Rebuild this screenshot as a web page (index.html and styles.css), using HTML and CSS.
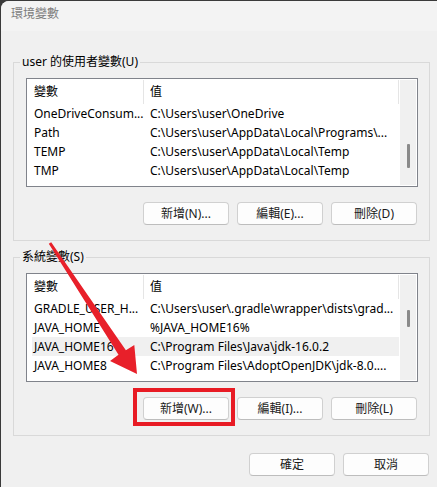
FILE: index.html
```html
<!DOCTYPE html>
<html lang="zh-Hant">
<head>
<meta charset="utf-8">
<title>環境變數</title>
<link rel="stylesheet" href="styles.css">
</head>
<body>
<div class="window">
  <div class="titlebar">環境變數</div>
  <div class="content">
    <section class="group">
      <span class="group-title">user 的使用者變數(U)</span>
      <div class="listview">
        <div class="table">
          <div class="row header"><span class="c1">變數</span><span class="c2">值</span></div>
          <div class="row"><span class="c1">OneDriveConsum...</span><span class="c2">C:\Users\user\OneDrive</span></div>
          <div class="row"><span class="c1">Path</span><span class="c2">C:\Users\user\AppData\Local\Programs\...</span></div>
          <div class="row"><span class="c1">TEMP</span><span class="c2">C:\Users\user\AppData\Local\Temp</span></div>
          <div class="row"><span class="c1">TMP</span><span class="c2">C:\Users\user\AppData\Local\Temp</span></div>
        </div>
        <div class="scrollbar"><div class="thumb thumb-user"></div></div>
      </div>
      <div class="buttons">
        <button class="btn">新增(N)...</button>
        <button class="btn">編輯(E)...</button>
        <button class="btn">刪除(D)</button>
      </div>
    </section>

    <section class="group group-system">
      <span class="group-title">系統變數(S)</span>
      <div class="listview">
        <div class="table">
          <div class="row header"><span class="c1">變數</span><span class="c2">值</span></div>
          <div class="row"><span class="c1">GRADLE_USER_H...</span><span class="c2">C:\Users\user\.gradle\wrapper\dists\grad...</span></div>
          <div class="row"><span class="c1">JAVA_HOME</span><span class="c2">%JAVA_HOME16%</span></div>
          <div class="row hl"><span class="c1">JAVA_HOME16</span><span class="c2">C:\Program Files\Java\jdk-16.0.2</span></div>
          <div class="row"><span class="c1">JAVA_HOME8</span><span class="c2">C:\Program Files\AdoptOpenJDK\jdk-8.0....</span></div>
        </div>
        <div class="scrollbar"><div class="thumb thumb-system"></div></div>
      </div>
      <div class="buttons">
        <div class="marked">
          <button class="btn">新增(W)...</button>
          <span class="redbox"></span>
        </div>
        <button class="btn">編輯(I)...</button>
        <button class="btn">刪除(L)</button>
      </div>
    </section>

    <div class="footer">
      <button class="btn">確定</button>
      <button class="btn">取消</button>
    </div>
  </div>

  <svg class="arrow" width="436" height="486" viewBox="0 0 436 486" aria-hidden="true">
    <polygon points="50.2,241.2 124.9,349.2 133.3,344 136,373 109,360 117.5,353.8 47.8,242.8" fill="#e8202a"/>
  </svg>
</div>
</body>
</html>
```

FILE: styles.css
```css
html, body {
  margin: 0;
  padding: 0;
}

body {
  background: #3a3a3a;
  padding: 1px 0 0 1px;
  font-family: "Noto Sans", "Noto Sans CJK TC", sans-serif;
  font-size: 12px;
  color: #000;
}

.window {
  position: relative;
  width: 436px;
  height: 486px;
  background: #f0f0f0;
  border-top-left-radius: 8px;
  overflow: hidden;
}

.titlebar {
  height: 30px;
  line-height: 26px;
  padding-left: 10px;
  background: #f3f3f3;
  color: #7c7c7c;
  font-size: 12px;
}

.content {
  padding: 31px 7px 0 12px;
}

.group {
  position: relative;
  border: 1px solid #d9d9d9;
  padding: 15px 11px 15px 12px;
}

.group-system {
  margin-top: 16px;
}

.group-title {
  position: absolute;
  top: -9px;
  left: 6px;
  padding: 0 2px;
  line-height: 16px;
  background: #f0f0f0;
  white-space: nowrap;
}

.listview {
  display: flex;
  height: 105px;
  border: 1px solid #80838b;
  background: #fff;
  padding: 1px;
  box-sizing: content-box;
}

.table {
  flex: 1;
  overflow: hidden;
}

.row {
  display: flex;
  height: 19px;
  line-height: 19px;
  white-space: nowrap;
}

.row.header {
  height: 24px;
  line-height: 24px;
}

.c1 {
  width: 116px;
  flex: none;
  padding-left: 6px;
  box-sizing: border-box;
  overflow: hidden;
}

.c2 {
  flex: 1;
  padding-left: 6px;
  overflow: hidden;
}

.header .c1 {
  border-right: 1px solid #e5e5e5;
  width: 116px;
}

.header .c2 {
  flex: none;
  width: 255px;
  box-sizing: border-box;
  border-right: 1px solid #e5e5e5;
}

.row.hl {
  margin-left: 4px;
  background: #f0f0f0;
}

.row.hl .c1 {
  width: 112px;
  padding-left: 2px;
}

.scrollbar {
  width: 16px;
  margin-left: 1px;
  background: #f0f0f0;
  flex: none;
}

.thumb {
  width: 3px;
  margin-left: 7px;
  background: #8a8a8a;
  border-radius: 1px;
}

.thumb-user {
  margin-top: 64px;
  height: 24px;
}

.thumb-system {
  margin-top: 35px;
  height: 17px;
}

.buttons {
  display: flex;
  justify-content: flex-end;
  gap: 8px;
  margin-top: 15px;
  margin-right: 1px;
}

.btn {
  width: 86px;
  height: 23px;
  padding: 0;
  border: 1px solid #d0d0d0;
  border-bottom-color: #bdbdbd;
  border-radius: 4px;
  background: #fdfdfd;
  font-family: "Noto Sans", "Noto Sans CJK TC", sans-serif;
  font-size: 12px;
  color: #1a1a1a;
  line-height: 20px;
}

.marked {
  position: relative;
  display: flex;
}

.redbox {
  position: absolute;
  left: -10px;
  top: -9px;
  width: 102px;
  height: 38px;
  box-sizing: border-box;
  border: 4px solid #e81b24;
}

.footer {
  display: flex;
  justify-content: flex-end;
  gap: 8px;
  margin-top: 17px;
  margin-right: 1px;
}

.arrow {
  position: absolute;
  left: 0;
  top: 0;
  pointer-events: none;
}
```
